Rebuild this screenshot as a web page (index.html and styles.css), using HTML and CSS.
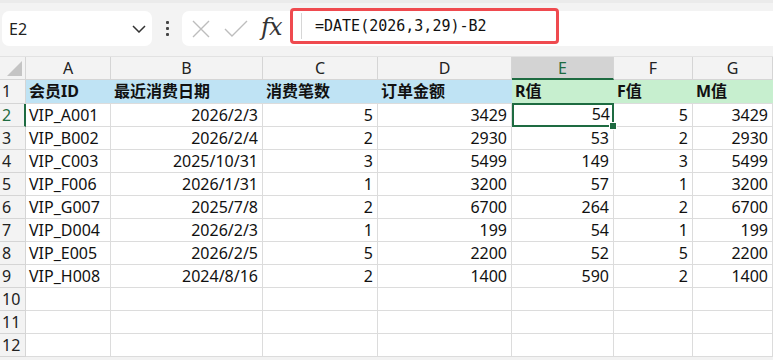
FILE: index.html
```html
<!DOCTYPE html>
<html lang="zh-CN">
<head>
  <meta charset="UTF-8" />
  <title>RFM 表</title>
  <link rel="stylesheet" href="styles.css">
</head>
<body>

  <!-- Formula bar -->
  <div class="toolbar">
    <div class="name-box">
      <span>E2</span>
      <svg width="14" height="8" viewBox="0 0 14 8"><path d="M1 1 L7 7 L13 1" fill="none" stroke="#333" stroke-width="1.5"/></svg>
    </div>
    <div class="dots"><i></i><i></i><i></i></div>
    <div class="formula-bar">
      <svg class="icon" width="20" height="18" viewBox="0 0 20 18"><path d="M2 1 L18 17 M18 1 L2 17" stroke="#bdbdbd" stroke-width="1.4"/></svg>
      <svg class="icon" width="24" height="18" viewBox="0 0 24 18"><path d="M1 9 L8 16 L23 1" fill="none" stroke="#bdbdbd" stroke-width="1.4"/></svg>
      <span class="fx">fx</span>
    </div>
    <div class="formula-mark">
      <span class="sep"></span>
      <span class="formula">=DATE(2026,3,29)-B2</span>
    </div>
  </div>

  <!-- Sheet -->
  <div class="sheet">
    <div class="corner"><span></span></div>
    <div class="col-hd">A</div>
    <div class="col-hd">B</div>
    <div class="col-hd">C</div>
    <div class="col-hd">D</div>
    <div class="col-hd active">E</div>
    <div class="col-hd">F</div>
    <div class="col-hd">G</div>

    <div class="row-hd">1</div>
    <div class="cell head blue">会员ID</div>
    <div class="cell head blue">最近消费日期</div>
    <div class="cell head blue">消费笔数</div>
    <div class="cell head blue">订单金额</div>
    <div class="cell head green">R值</div>
    <div class="cell head green">F值</div>
    <div class="cell head green">M值</div>

    <div class="row-hd active">2</div>
    <div class="cell">VIP_A001</div>
    <div class="cell num">2026/2/3</div>
    <div class="cell num">5</div>
    <div class="cell num">3429</div>
    <div class="cell num selected">54</div>
    <div class="cell num">5</div>
    <div class="cell num">3429</div>

    <div class="row-hd">3</div>
    <div class="cell">VIP_B002</div>
    <div class="cell num">2026/2/4</div>
    <div class="cell num">2</div>
    <div class="cell num">2930</div>
    <div class="cell num">53<span class="handle"></span></div>
    <div class="cell num">2</div>
    <div class="cell num">2930</div>

    <div class="row-hd">4</div>
    <div class="cell">VIP_C003</div>
    <div class="cell num">2025/10/31</div>
    <div class="cell num">3</div>
    <div class="cell num">5499</div>
    <div class="cell num">149</div>
    <div class="cell num">3</div>
    <div class="cell num">5499</div>

    <div class="row-hd">5</div>
    <div class="cell">VIP_F006</div>
    <div class="cell num">2026/1/31</div>
    <div class="cell num">1</div>
    <div class="cell num">3200</div>
    <div class="cell num">57</div>
    <div class="cell num">1</div>
    <div class="cell num">3200</div>

    <div class="row-hd">6</div>
    <div class="cell">VIP_G007</div>
    <div class="cell num">2025/7/8</div>
    <div class="cell num">2</div>
    <div class="cell num">6700</div>
    <div class="cell num">264</div>
    <div class="cell num">2</div>
    <div class="cell num">6700</div>

    <div class="row-hd">7</div>
    <div class="cell">VIP_D004</div>
    <div class="cell num">2026/2/3</div>
    <div class="cell num">1</div>
    <div class="cell num">199</div>
    <div class="cell num">54</div>
    <div class="cell num">1</div>
    <div class="cell num">199</div>

    <div class="row-hd">8</div>
    <div class="cell">VIP_E005</div>
    <div class="cell num">2026/2/5</div>
    <div class="cell num">5</div>
    <div class="cell num">2200</div>
    <div class="cell num">52</div>
    <div class="cell num">5</div>
    <div class="cell num">2200</div>

    <div class="row-hd">9</div>
    <div class="cell">VIP_H008</div>
    <div class="cell num">2024/8/16</div>
    <div class="cell num">2</div>
    <div class="cell num">1400</div>
    <div class="cell num">590</div>
    <div class="cell num">2</div>
    <div class="cell num">1400</div>

    <div class="row-hd">10</div>
    <div class="cell"></div><div class="cell"></div><div class="cell"></div><div class="cell"></div><div class="cell"></div><div class="cell"></div><div class="cell"></div>

    <div class="row-hd">11</div>
    <div class="cell"></div><div class="cell"></div><div class="cell"></div><div class="cell"></div><div class="cell"></div><div class="cell"></div><div class="cell"></div>

    <div class="row-hd">12</div>
    <div class="cell"></div><div class="cell"></div><div class="cell"></div><div class="cell"></div><div class="cell"></div><div class="cell"></div><div class="cell"></div>
  </div>

</body>
</html>
```

FILE: styles.css
```css
* {
  margin: 0; padding: 0;
  box-sizing: border-box;
}

body, html {
  width: 773px;
  height: 360px;
  overflow: hidden;
  font-family: 'Noto Sans', 'Noto Sans CJK SC', sans-serif;
  background: #f2f2f2;
  color: #111;
}

/* Formula bar */
.toolbar {
  position: relative;
  height: 57px;
  display: flex;
  align-items: flex-start;
  padding: 11px 0 0 2px;
  background: #f3f3f3;
  border-top: 3px solid #ebebeb;
  border-bottom: 1px solid #e2e2e2;
}

.name-box {
  width: 150px;
  height: 35px;
  margin-top: -3px;
  background: white;
  border-radius: 7px;
  display: flex;
  align-items: center;
  justify-content: space-between;
  padding: 0 6px 0 7px;
  font-size: 16px;
  color: #222;
}

.dots {
  width: 30px;
  height: 35px;
  margin-top: -3px;
  display: flex;
  flex-direction: column;
  align-items: center;
  justify-content: center;
  gap: 3px;
}

.dots i {
  width: 3px;
  height: 3px;
  background: #444;
  border-radius: 1px;
}

.formula-bar {
  flex: 1;
  height: 35px;
  margin-top: -3px;
  background: white;
  border-radius: 7px 0 0 7px;
  display: flex;
  align-items: center;
  padding-left: 9px;
  gap: 13px;
}

.formula-bar .icon {
  flex: none;
}

.fx {
  font-family: 'DejaVu Serif', 'Liberation Serif', serif;
  font-style: italic;
  font-size: 24px;
  line-height: 1;
  color: #333;
  margin-top: -4px;
  letter-spacing: -1px;
}

/* red annotation round the formula */
.formula-mark {
  position: absolute;
  left: 290px;
  top: 5px;
  width: 269px;
  height: 36px;
  border: 3px solid #ef4a4f;
  border-radius: 4px;
  display: flex;
  align-items: center;
  background: white;
}

.formula-mark .sep {
  width: 1px;
  height: 26px;
  background: #d6d6d6;
  margin-left: 8px;
}

.formula {
  font-family: 'DejaVu Sans Mono', 'Liberation Mono', monospace;
  font-size: 15px;
  color: #111;
  margin-left: 13px;
  margin-top: -1px;
}

/* Sheet grid */
.sheet {
  display: grid;
  grid-template-columns: 26px 85px 152px 115px 134px 102px 79px 80px;
  grid-template-rows: 23px 24px repeat(11, 23px);
  background: white;
}

.corner {
  background: #f3f3f3;
  border-right: 1px solid #d5d5d5;
  border-bottom: 1px solid #d5d5d5;
  position: relative;
}

.corner span {
  position: absolute;
  right: 3px;
  bottom: 3px;
  width: 0;
  height: 0;
  border-left: 15px solid transparent;
  border-bottom: 15px solid #c4c4c4;
}

.col-hd {
  background: #f3f3f3;
  border-right: 1px solid #d5d5d5;
  border-bottom: 1px solid #d5d5d5;
  text-align: center;
  font-size: 16px;
  line-height: 23px;
  color: #222;
}

.col-hd.active {
  background: #d3d3d3;
  color: #1e6b41;
  border-bottom: 2px solid #1e6b41;
}

.row-hd {
  background: #f3f3f3;
  border-right: 1px solid #d5d5d5;
  border-bottom: 1px solid #d5d5d5;
  font-size: 16px;
  line-height: 22px;
  padding-left: 2px;
  color: #222;
}

.row-hd.active {
  color: #1e6b41;
  border-right: 2px solid #1e6b41;
}

.cell {
  border-right: 1px solid #dcdcdc;
  border-bottom: 1px solid #dcdcdc;
  font-size: 16px;
  line-height: 22px;
  padding: 0 4px 0 3px;
  white-space: nowrap;
  overflow: hidden;
  position: relative;
}

.cell.num {
  text-align: right;
}

.cell.head {
  font-weight: bold;
  line-height: 23px;
  border-right: none;
}

.blue {
  background: #bfe3f4;
}

.green {
  background: #c7efcf;
}

.selected {
  border: 2px solid #1e6b41;
  line-height: 19px;
  padding-right: 2px;
  margin-top: -1px;
}

/* fill handle, sits on the corner shared with E3 */
.cell:has(.handle) {
  overflow: visible;
  z-index: 3;
}

.handle {
  position: absolute;
  right: -4px;
  top: -5px;
  width: 8px;
  height: 8px;
  background: #1e6b41;
  border: 1px solid white;
}
```
